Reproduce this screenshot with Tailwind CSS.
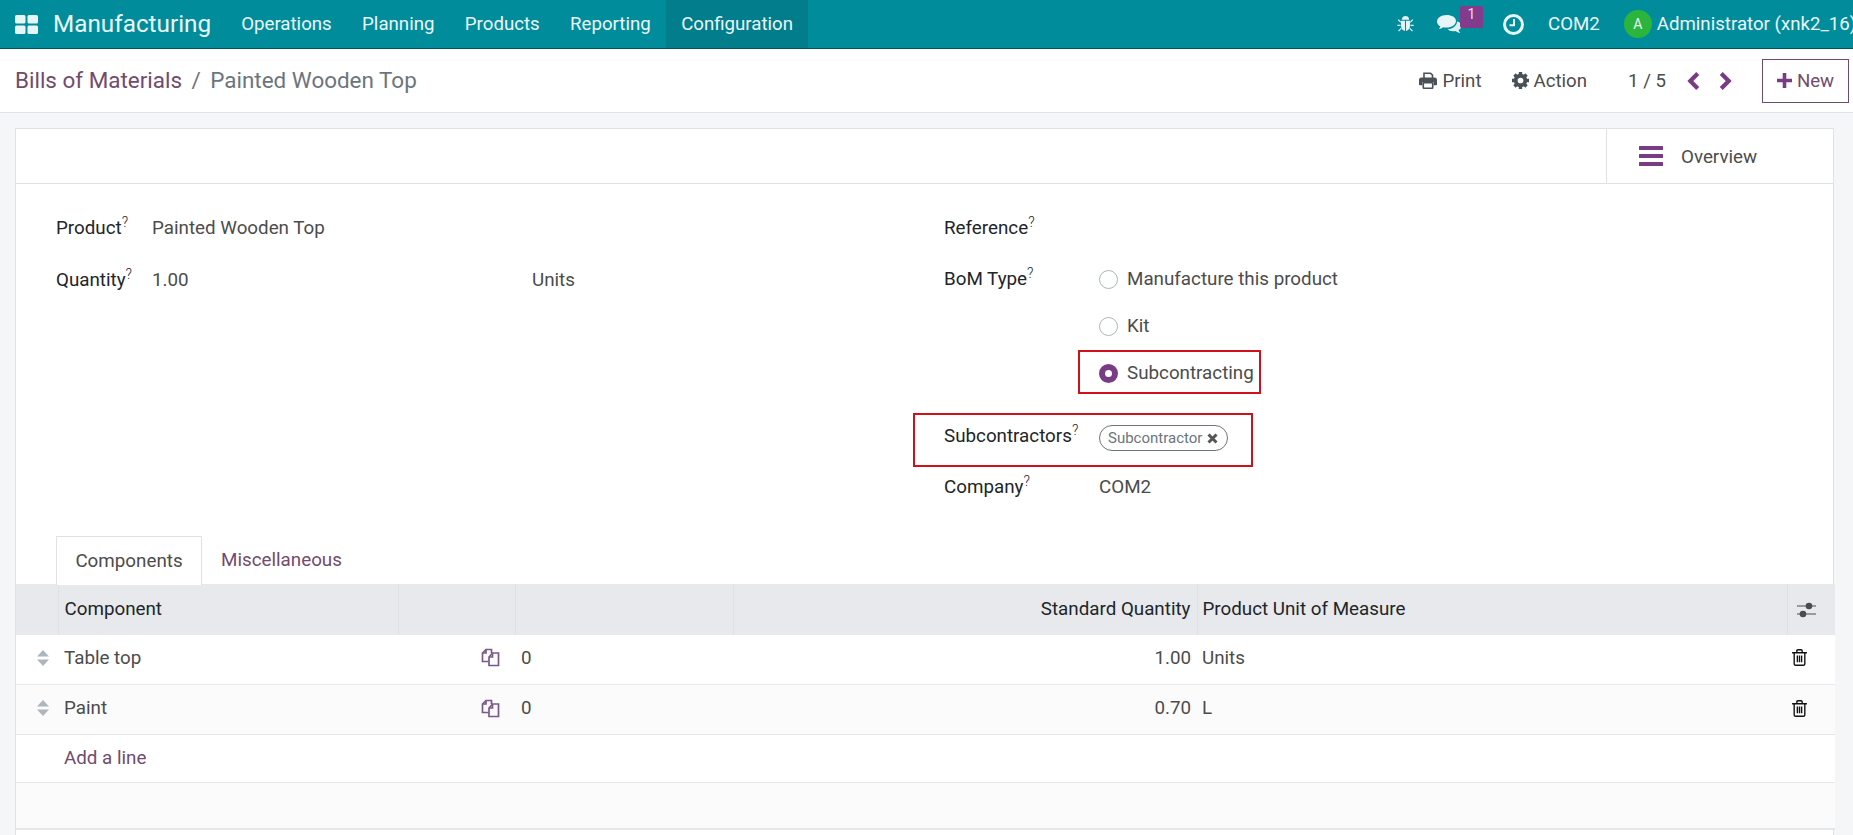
<!DOCTYPE html>
<html><head><meta charset="utf-8"><script src="https://cdn.jsdelivr.net/npm/@tailwindcss/browser@4"></script></head>
<body class="m-0">
<div class="w-[1853px] h-[835px] overflow-hidden bg-[#f5f6f8] font-['Roboto',sans-serif] text-[18.67px] text-[#4c4c4c] flex flex-col">
  <!-- navbar -->
  <header class="h-[49px] shrink-0 bg-[#018c9c] border-b border-[#02505a] flex items-center text-[#e9f6f7] whitespace-nowrap">
    <svg class="ml-[15px] w-[23px] h-[19px] shrink-0" viewBox="0 0 23 19" fill="#e6f5f6"><rect width="10.500" height="8.500" rx="1.500"/><rect x="12.500" width="10.500" height="8.500" rx="1.500"/><rect y="10.500" width="10.500" height="8.500" rx="1.500"/><rect x="12.500" y="10.500" width="10.500" height="8.500" rx="1.500"/></svg>
    <span class="ml-[15px] text-[24.3px] w-[173px] shrink-0">Manufacturing</span>
    <nav class="flex h-full items-center">
      <span class="px-[15.2px] h-full flex items-center">Operations</span>
      <span class="px-[15.2px] h-full flex items-center">Planning</span>
      <span class="px-[15.2px] h-full flex items-center">Products</span>
      <span class="px-[15.2px] h-full flex items-center">Reporting</span>
      <span class="px-[15.2px] h-full flex items-center bg-[#017d8b]">Configuration</span>
    </nav>
    <div class="ml-auto flex items-center h-full relative w-[456px] shrink-0 overflow-hidden">
      <svg class="ml-[0px] w-[17px] h-[18px] shrink-0" viewBox="0 0 16 17" fill="#e6f5f6"><path d="M4.500 4.500C4.800 2 6.200 1 8 1s3.200 1 3.500 3.500z"/><path d="M3.800 5.500h3.700V15c-2.300-.3-3.700-2-3.700-4.500zM8.500 5.500h3.700v5c0 2.500-1.400 4.200-3.700 4.500z"/><path d="M3.500 6 1.500 4 .7 4.800l2.800 2.700zM12.500 6l2-2 .8.800-2.800 2.700zM3.300 9.300H.3v1.200h3zM12.700 9.300h3v1.200h-3zM3.800 12 1 14.800l.8.800 2.500-2.500zM12.200 12l2.800 2.800-.8.800-2.500-2.500z"/></svg>
      <svg class="ml-[23px] w-[25px] h-[19px] shrink-0" viewBox="0 0 25 19" fill="#e6f5f6"><path d="M9.500 0C4.300 0 0 2.900 0 6.500c0 2 1.300 3.800 3.400 5-.3 1-.9 1.800-1.500 2.500 1.500-.2 3-.8 4.200-1.800 1.100.3 2.200.4 3.400.4 5.200 0 9.500-2.900 9.500-6.600S14.700 0 9.500 0z"/><path d="M20 6.500c.1 4-4 7.400-9.500 7.700 1.300 1.300 3.300 2 5.500 2 .8 0 1.700-.1 2.500-.3 1.400 1.100 3 1.800 4.800 2-.8-.8-1.400-1.700-1.800-2.800 1.900-1 3-2.600 3-4.400 0-2-1.700-3.700-4.500-4.200z" opacity=".95"/></svg>
      <span class="absolute left-[63px] top-[6px] w-[23px] h-[22px] rounded-[2px] bg-[#853b8b] text-[14px] leading-[16px] text-center text-[#eadcec]">1</span>
      <svg class="ml-[41px] w-[21px] h-[21px] shrink-0" viewBox="0 0 21 21" fill="none" stroke="#e6f5f6"><circle cx="10.500" cy="10.500" r="9" stroke-width="3"/><path d="M11 5v6.200H6.500" stroke-width="2"/></svg>
      <span class="ml-[24px]">COM2</span>
      <span class="ml-[24px] w-[28px] h-[28px] rounded-full bg-[#2bb53c] text-[14px] text-[#e9f6f7] flex items-center justify-center shrink-0">A</span>
      <span class="ml-[5px]">Administrator (xnk2_16)</span>
    </div>
  </header>
  <!-- control panel -->
  <div class="h-[64px] shrink-0 bg-white border-b border-[#dee2e6] flex items-center whitespace-nowrap relative">
    <div class="ml-[15px] text-[22.45px] flex items-center">
      <span class="text-[#714b6f]">Bills of Materials</span>
      <span class="mx-[9.500px] text-[#6c757d]">/</span>
      <span class="text-[#6c757d]">Painted Wooden Top</span>
    </div>
    <div class="ml-auto flex items-center h-full">
      <svg class="w-[18px] h-[17px] shrink-0" viewBox="0 0 18 17"><path d="M5 6V1.200h6.500L13.500 3.200V6" fill="none" stroke="#495057" stroke-width="1.600"/><path d="M2.500 5.500h13A2.500 2.500 0 0 1 18 8v4.500q0 .8-.8.8H14.500V10h-11v3.300H.8q-.8 0-.8-.8V8a2.500 2.500 0 0 1 2.500-2.500z" fill="#495057"/><rect x="4.300" y="10.800" width="9.400" height="5.400" rx=".5" fill="#fff" stroke="#495057" stroke-width="1.600"/></svg>
      <span class="ml-[5px]">Print</span>
      <svg class="ml-[30px] w-[17px] h-[17px] shrink-0" viewBox="0 0 16 16"><circle cx="8" cy="8" r="4.500" fill="none" stroke="#495057" stroke-width="3.600"/><g stroke="#495057" stroke-width="3.200"><path d="M8 0v3M8 13v3M0 8h3M13 8h3M2.300 2.300l2.100 2.100M11.600 11.600l2.100 2.100M2.300 13.700l2.100-2.100M11.600 4.400l2.100-2.100"/></g></svg>
      <span class="ml-[5px]">Action</span>
      <span class="ml-[41px]">1 / 5</span>
      <svg class="ml-[21px] w-[13px] h-[18px] shrink-0" viewBox="0 0 12 17" fill="none" stroke="#7a3b85" stroke-width="4"><path d="M10 1.500 3 8.500l7 7"/></svg>
      <svg class="ml-[19px] w-[13px] h-[18px] shrink-0" viewBox="0 0 12 17" fill="none" stroke="#7a3b85" stroke-width="4"><path d="M2 1.500l7 7-7 7"/></svg>
      <div class="ml-[30px] mr-[4px] w-[87px] h-[44px] border border-[#714b6f] text-[#714b6f] flex items-center justify-center gap-[5px]">
        <svg class="w-[15px] h-[15px]" viewBox="0 0 15 15" fill="#7a3b85"><path d="M5.700 0h3.600v5.700H15v3.600H9.300V15H5.700V9.300H0V5.700h5.700z"/></svg>
        <span>New</span>
      </div>
    </div>
  </div>
  <!-- sheet -->
  <main class="mt-[15px] ml-[15px] w-[1819px] flex-1 bg-white border border-b-0 border-[#dee2e6] relative text-[18.8px]">
    <div class="h-[55px] border-b border-[#dee2e6] flex justify-end">
      <div class="w-[227px] border-l border-[#dee2e6] flex items-center pl-[32px]">
        <svg class="w-[24px] h-[20px] shrink-0" viewBox="0 0 24 20" fill="#7a3b85"><rect width="24" height="4" rx=".5"/><rect y="8" width="24" height="4" rx=".5"/><rect y="16" width="24" height="4" rx=".5"/></svg>
        <span class="ml-[18px] relative top-[1px]">Overview</span>
      </div>
    </div>
    <!-- form -->
    <div class="flex h-[352px] whitespace-nowrap">
      <div class="w-[928px] shrink-0 pl-[40px] pt-[24px]">
        <div class="h-[40px] flex items-center">
          <span class="w-[96px] text-[#212529]">Product<sup class="text-[14px] font-light">?</sup></span>
          <span>Painted Wooden Top</span>
        </div>
        <div class="h-[40px] mt-[12px] flex items-center">
          <span class="w-[96px] text-[#212529]">Quantity<sup class="text-[14px] font-light">?</sup></span>
          <span class="w-[380px]">1.00</span>
          <span>Units</span>
        </div>
      </div>
      <div class="flex-1 pt-[24px]">
        <div class="h-[40px] flex items-center"><span class="text-[#212529]">Reference<sup class="text-[14px] font-light">?</sup></span></div>
        <div class="flex mt-[8px]">
          <span class="w-[155px] h-[47px] flex items-center text-[#212529]"><span>BoM Type<sup class="text-[14px] font-light">?</sup></span></span>
          <div class="flex flex-col">
            <div class="h-[47px] flex items-center gap-[9px]"><span class="w-[19px] h-[19px] rounded-full border border-[#adb5bd] bg-white"></span>Manufacture this product</div>
            <div class="h-[47px] flex items-center gap-[9px]"><span class="w-[19px] h-[19px] rounded-full border border-[#adb5bd] bg-white"></span>Kit</div>
            <div class="h-[47px] flex items-center gap-[9px]"><span class="w-[19px] h-[19px] rounded-full border-[6px] border-[#7a3b85] bg-white"></span>Subcontracting</div>
          </div>
        </div>
        <div class="flex items-center h-[40px] mt-[19px]">
          <span class="w-[155px] text-[#212529]">Subcontractors<sup class="text-[14px] font-light">?</sup></span>
          <span class="mt-[4px] h-[26px] w-[129px] border border-[#6c757d] rounded-full text-[15px] text-[#6c757d] flex items-center pl-[8px] gap-[5px]">Subcontractor
            <svg class="w-[11px] h-[11px]" viewBox="0 0 11 11" stroke="#555" stroke-width="3" fill="none"><path d="M1.500 1.500l8 8M9.500 1.500l-8 8"/></svg>
          </span>
        </div>
        <div class="flex items-center h-[40px] mt-[11px]">
          <span class="w-[155px] text-[#212529]">Company<sup class="text-[14px] font-light">?</sup></span>
          <span>COM2</span>
        </div>
      </div>
    </div>
    <!-- tabs -->
    <div class="h-[48px] pl-[40px] flex items-stretch whitespace-nowrap relative z-10">
      <span class="w-[146px] h-[49px] border border-b-0 border-[#dee2e6] bg-white flex items-center justify-center">Components</span>
      <span class="ml-[19px] flex items-center text-[#714b6f]">Miscellaneous</span>
    </div>
    <!-- table -->
    <table class="w-full table-fixed border-collapse whitespace-nowrap">
      <colgroup><col class="w-[42px]"><col class="w-[340px]"><col class="w-[117px]"><col class="w-[218px]"><col class="w-[464px]"><col class="w-[590px]"><col class="w-[48px]"></colgroup>
      <thead>
        <tr class="h-[51px] bg-[#e7e9ed] text-[#212529]">
          <th class="font-normal border-r border-[#dee2e6]"></th>
          <th class="font-normal text-left pl-[6px] pb-[1px] border-r border-[#dee2e6]">Component</th>
          <th class="font-normal border-r border-[#dee2e6]"></th>
          <th class="font-normal border-r border-[#dee2e6]"></th>
          <th class="font-normal text-right pr-[6px] pb-[1px] border-r border-[#dee2e6]">Standard Quantity</th>
          <th class="font-normal text-left pl-[5px] pb-[1px] border-r border-[#dee2e6]">Product Unit of Measure</th>
          <th class="font-normal"><svg class="w-[19px] h-[16px] ml-[9px]" viewBox="0 0 19 16"><path d="M0 4h19M0 12h19" stroke="#4c4c4c" stroke-width="1.200"/><circle cx="12" cy="4" r="3.300" fill="#4c4c4c"/><circle cx="6" cy="12" r="3.300" fill="#4c4c4c"/></svg></th>
        </tr>
      </thead>
      <tbody>
        <tr class="h-[49px] border-b border-[#e5e7eb] bg-white">
          <td class="pb-[3px]"><svg class="w-[12px] h-[16px] ml-[21px]" viewBox="0 0 12 16" fill="#adb5bd"><path d="M6 0l6 6.500H0zM6 16l6-6.500H0z"/></svg></td>
          <td class="pl-[6px] pb-[3px]">Table top</td>
          <td class="pb-[3px]"><svg class="w-[19px] h-[19px] ml-[83px]" viewBox="0 0 19 19" fill="none" stroke="#7a5a8a" stroke-width="1.700"><path d="M7.500 13.500H1.500V5L5 1.500h5.500V5"/><path d="M5 1.500V5H1.500"/><path d="M8 17.500V9l3.500-4h6v12.500z"/><path d="M11.500 5v4H8"/></svg></td>
          <td class="pl-[6px] pb-[3px]">0</td>
          <td class="text-right pr-[6px] pb-[3px]">1.00</td>
          <td class="pl-[5px] pb-[3px]">Units</td>
          <td class="pb-[3px]"><svg class="w-[15px] h-[17px] ml-[5px]" viewBox="0 0 14 16" fill="none" stroke="#111" stroke-width="1.300"><path d="M0 3.500h14M2 3.500v10.500q0 1.300 1.300 1.300h7.400q1.300 0 1.300-1.300V3.500M4.500 3.500V1.800Q4.500.7 5.500.7h3q1 0 1 1.100v1.700M5 6v6.500M7 6v6.500M9 6v6.500"/></svg></td>
        </tr>
        <tr class="h-[50px] border-b border-[#e5e7eb] bg-[#fbfbfc]">
          <td class="pb-[2px]"><svg class="w-[12px] h-[16px] ml-[21px]" viewBox="0 0 12 16" fill="#adb5bd"><path d="M6 0l6 6.500H0zM6 16l6-6.500H0z"/></svg></td>
          <td class="pl-[6px] pb-[2px]">Paint</td>
          <td class="pb-[2px]"><svg class="w-[19px] h-[19px] ml-[83px]" viewBox="0 0 19 19" fill="none" stroke="#7a5a8a" stroke-width="1.700"><path d="M7.500 13.500H1.500V5L5 1.500h5.500V5"/><path d="M5 1.500V5H1.500"/><path d="M8 17.500V9l3.500-4h6v12.500z"/><path d="M11.500 5v4H8"/></svg></td>
          <td class="pl-[6px] pb-[2px]">0</td>
          <td class="text-right pr-[6px] pb-[2px]">0.70</td>
          <td class="pl-[5px] pb-[2px]">L</td>
          <td class="pb-[2px]"><svg class="w-[15px] h-[17px] ml-[5px]" viewBox="0 0 14 16" fill="none" stroke="#111" stroke-width="1.300"><path d="M0 3.500h14M2 3.500v10.500q0 1.300 1.300 1.300h7.400q1.300 0 1.300-1.300V3.500M4.500 3.500V1.800Q4.500.7 5.500.7h3q1 0 1 1.100v1.700M5 6v6.500M7 6v6.500M9 6v6.500"/></svg></td>
        </tr>
        <tr class="h-[48px] border-b border-[#e5e7eb] bg-white">
          <td></td>
          <td class="pl-[6px] text-[#714b6f]">Add a line</td>
          <td colspan="5"></td>
        </tr>
        <tr class="h-[47px] border-b-2 border-[#e5e7eb] bg-[#fbfbfc]"><td colspan="7"></td></tr>
      </tbody>
    </table>
    <!-- red annotation boxes -->
    <div class="absolute left-[1062px] top-[221px] w-[183px] h-[44px] border-2 border-[#d0101b]"></div>
    <div class="absolute left-[897px] top-[284px] w-[340px] h-[54px] border-2 border-[#d0101b]"></div>
  </main>
</div>
</body></html>
